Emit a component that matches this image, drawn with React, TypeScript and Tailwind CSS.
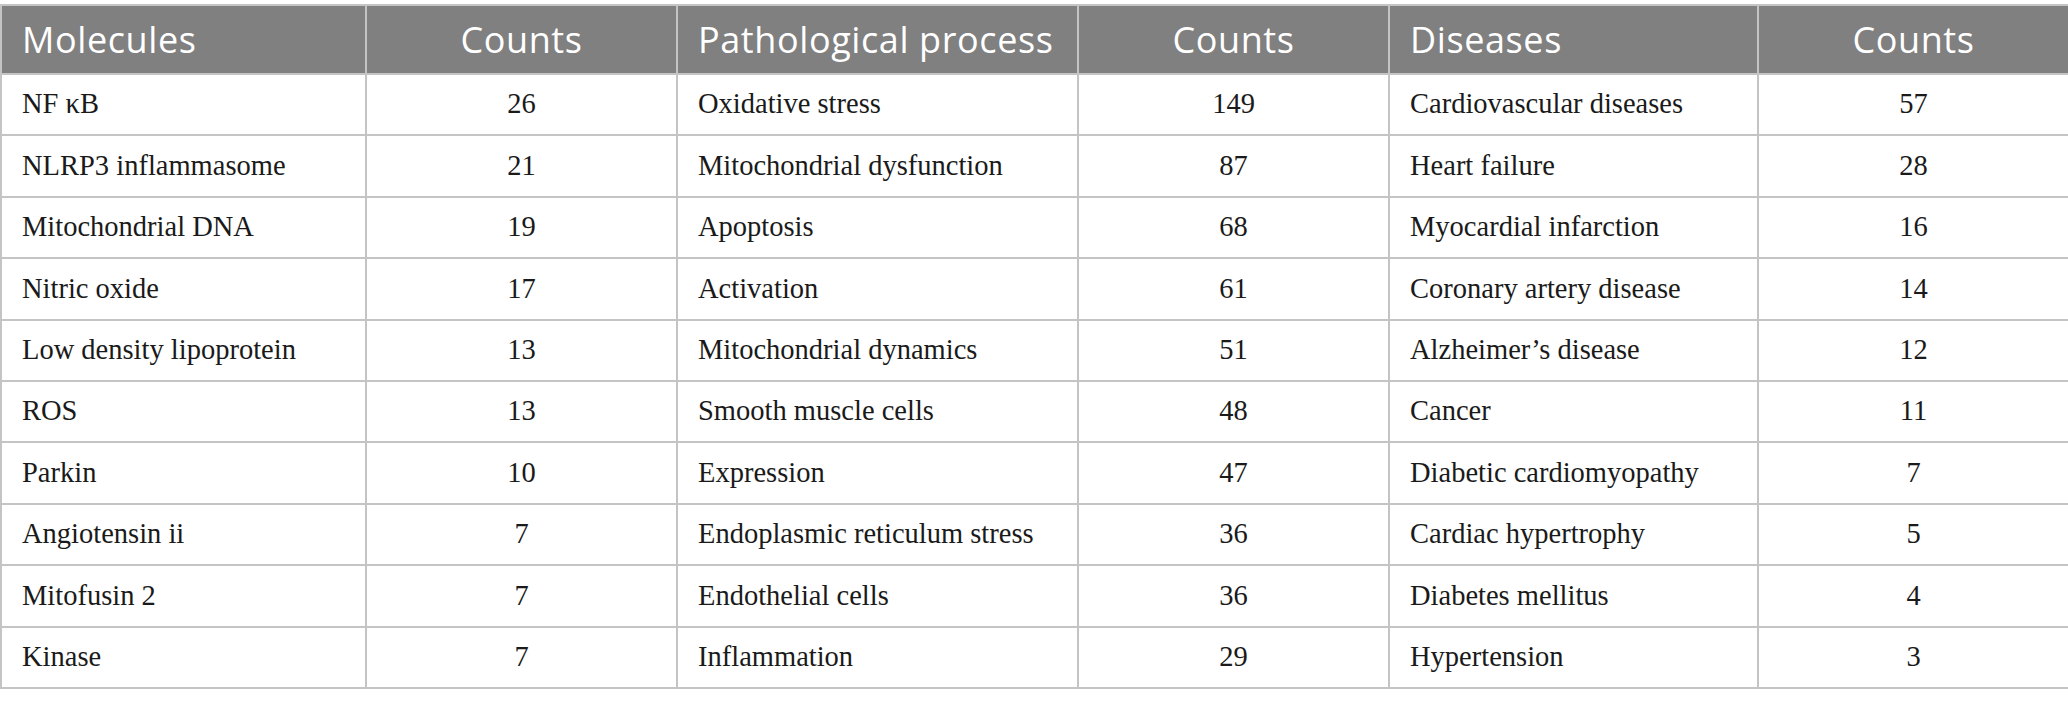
import React from "react";

const rows: [string, string, string, string, string, string][] = [
  ["NF κB", "26", "Oxidative stress", "149", "Cardiovascular diseases", "57"],
  ["NLRP3 inflammasome", "21", "Mitochondrial dysfunction", "87", "Heart failure", "28"],
  ["Mitochondrial DNA", "19", "Apoptosis", "68", "Myocardial infarction", "16"],
  ["Nitric oxide", "17", "Activation", "61", "Coronary artery disease", "14"],
  ["Low density lipoprotein", "13", "Mitochondrial dynamics", "51", "Alzheimer’s disease", "12"],
  ["ROS", "13", "Smooth muscle cells", "48", "Cancer", "11"],
  ["Parkin", "10", "Expression", "47", "Diabetic cardiomyopathy", "7"],
  ["Angiotensin ii", "7", "Endoplasmic reticulum stress", "36", "Cardiac hypertrophy", "5"],
  ["Mitofusin 2", "7", "Endothelial cells", "36", "Diabetes mellitus", "4"],
  ["Kinase", "7", "Inflammation", "29", "Hypertension", "3"],
];

const headers = ["Molecules", "Counts", "Pathological process", "Counts", "Diseases", "Counts"];

export default function App() {
  return (
    <div className="w-[2068px] h-[706px] bg-white pt-[4px]">
      <table className="w-[2068px] table-fixed border-collapse">
        <colgroup>
          <col className="w-[365px]" />
          <col className="w-[311px]" />
          <col className="w-[401px]" />
          <col className="w-[311px]" />
          <col className="w-[369px]" />
          <col className="w-[311px]" />
        </colgroup>
        <thead>
          <tr className="h-[69px] bg-[#7f807f]">
            {headers.map((h, i) => (
              <th
                key={i}
                className={`border-2 border-[#c4c4c4] px-[20px] text-[36px] font-normal tracking-[0.6px] text-white leading-none font-['Open_Sans',sans-serif] ${
                  i % 2 === 0 ? "text-left" : "text-center"
                }`}
              >
                {h}
              </th>
            ))}
          </tr>
        </thead>
        <tbody>
          {rows.map((r, ri) => (
            <tr key={ri} className="h-[61.4px]">
              {r.map((c, ci) => (
                <td
                  key={ci}
                  className={`border-2 border-[#c4c4c4] px-[20px] text-[28.5px] leading-none text-[#1a1a1a] font-['Liberation_Serif',serif] ${
                    ci % 2 === 0 ? "text-left" : "text-center"
                  }`}
                >
                  {c}
                </td>
              ))}
            </tr>
          ))}
        </tbody>
      </table>
    </div>
  );
}
